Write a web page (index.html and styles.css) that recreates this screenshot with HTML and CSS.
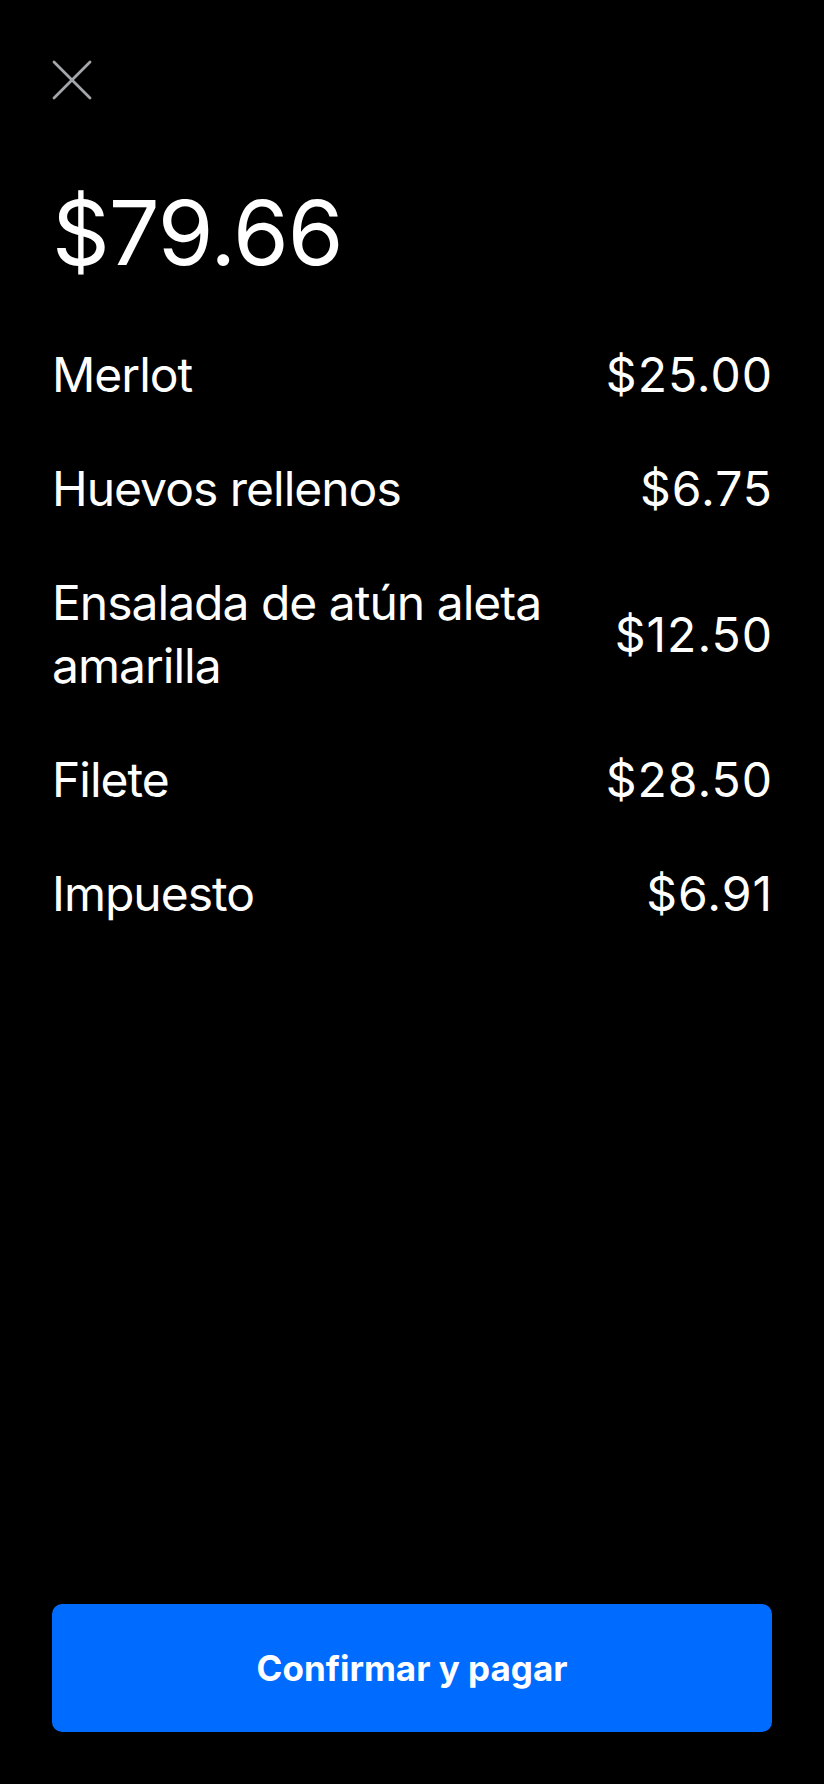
FILE: index.html
```html
<!DOCTYPE html>
<html lang="es">
<head>
    <meta charset="UTF-8">
    <meta name="viewport" content="width=device-width, initial-scale=1.0">
    <title>Confirmar y pagar</title>
    <link rel="stylesheet" href="styles.css">
</head>
<body>
    <div class="screen">
        <!-- Botón cerrar -->
        <button class="close-btn" aria-label="Cerrar">
            <svg width="40" height="40" viewBox="0 0 40 40">
                <path d="M2 2 L38 38 M38 2 L2 38" stroke="#a3a7ab" stroke-width="2.8" stroke-linecap="round" fill="none"/>
            </svg>
        </button>

        <div class="total">$79.66</div>

        <!-- Detalle de la cuenta -->
        <div class="items">
            <div class="item">
                <span class="item-name">Merlot</span>
                <span class="item-price">$25.00</span>
            </div>
            <div class="item">
                <span class="item-name">Huevos rellenos</span>
                <span class="item-price">$6.75</span>
            </div>
            <div class="item">
                <span class="item-name">Ensalada de atún aleta amarilla</span>
                <span class="item-price">$12.50</span>
            </div>
            <div class="item">
                <span class="item-name">Filete</span>
                <span class="item-price">$28.50</span>
            </div>
            <div class="item">
                <span class="item-name">Impuesto</span>
                <span class="item-price">$6.91</span>
            </div>
        </div>

        <button class="pay-btn">Confirmar y pagar</button>
    </div>
</body>
</html>
```

FILE: styles.css
```css
body {
    margin: 0;
    background-color: #000;
    color: #fff;
    font-family: 'Inter', 'Noto Sans', sans-serif;
}
.screen {
    display: flex;
    flex-direction: column;
    min-height: 1784px;
    padding: 0 52px;
    box-sizing: border-box;
}
.close-btn {
    display: block;
    width: 40px;
    height: 40px;
    margin-top: 60px;
    padding: 0;
    border: none;
    background: none;
    cursor: pointer;
}
.close-btn svg {
    display: block;
}
.total {
    margin-top: 79px;
    font-size: 90px;
    line-height: 108px;
    font-weight: 400;
    letter-spacing: -1px;
}
.items {
    display: flex;
    flex-direction: column;
    gap: 51px;
    margin-top: 56px;
}
.item {
    display: flex;
    justify-content: space-between;
    align-items: center;
    gap: 24px;
    font-size: 48px;
    line-height: 63px;
}
.item-name {
    flex: 1;
    letter-spacing: -1px;
}
.item-price {
    white-space: nowrap;
    text-align: right;
    letter-spacing: 1px;
    margin-right: -1px;
}
.pay-btn {
    margin-top: auto;
    margin-bottom: 52px;
    width: 100%;
    height: 128px;
    border: none;
    border-radius: 10px;
    background-color: #006cff;
    color: #fff;
    font-family: 'Inter', 'Noto Sans', sans-serif;
    font-size: 35px;
    font-weight: 700;
    cursor: pointer;
}
.pay-btn:hover {
    opacity: 0.9;
}
```
